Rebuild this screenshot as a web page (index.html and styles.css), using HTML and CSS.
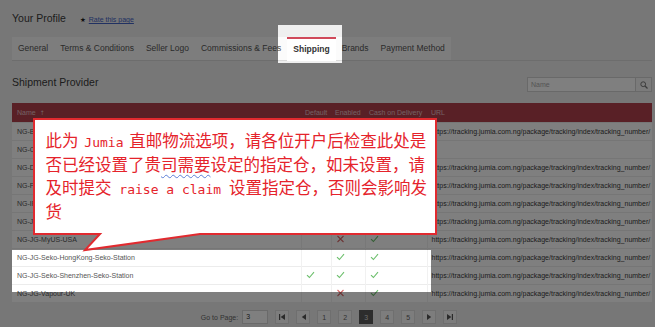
FILE: index.html
```html
<!DOCTYPE html>
<html lang="en">
<head>
<meta charset="utf-8">
<title>Your Profile - Shipping</title>
<link rel="stylesheet" href="styles.css">
</head>
<body>
<div class="page">
  <header class="profile-head">
    <h1 class="title">Your Profile</h1>
    <a class="rate" href="#"><span class="star">★</span><span class="rate-text">Rate this page</span></a>
  </header>
  <nav class="tabs">
    <ul class="tab-list">
      <li class="tab">General</li>
      <li class="tab">Terms &amp; Conditions</li>
      <li class="tab">Seller Logo</li>
      <li class="tab">Commissions &amp; Fees</li>
      <li class="tab active">Shipping</li>
      <li class="tab">Brands</li>
      <li class="tab">Payment Method</li>
    </ul>
  </nav>
  <section class="panel">
    <div class="toolbar">
      <h2 class="subtitle">Shipment Provider</h2>
      <div class="search">
        <span class="search-input">Name</span>
        <span class="search-btn"><svg width="8" height="8" viewBox="0 0 8 8"><circle cx="3.2" cy="3.2" r="2.4" fill="none" stroke="#777" stroke-width="1"/><path d="M5 5 L7.5 7.5" stroke="#777" stroke-width="1.3"/></svg></span>
      </div>
    </div>
    <table class="grid">
      <colgroup><col class="w-name"><col class="w-def"><col class="w-en"><col class="w-cod"><col class="w-url"></colgroup>
      <thead>
        <tr><th class="c-name">Name <span class="sort">↑</span></th><th>Default</th><th>Enabled</th><th>Cash on Delivery</th><th>URL</th></tr>
      </thead>
      <tbody>
        <tr><td class="c-name">NG-BluePost-Express</td><td></td><td><svg class="ic" width="9" height="8" viewBox="0 0 9 8"><path d="M1 4.2 L3.4 6.5 L8 1.2" fill="none" stroke="#6cbf6c" stroke-width="1.1"/></svg></td><td><svg class="ic" width="9" height="8" viewBox="0 0 9 8"><path d="M1 4.2 L3.4 6.5 L8 1.2" fill="none" stroke="#6cbf6c" stroke-width="1.1"/></svg></td><td class="c-url">https://tracking.jumia.com.ng/package/tracking/index/tracking_number/</td></tr>
        <tr><td class="c-name">NG-Clicknship</td><td></td><td><svg class="ic" width="9" height="8" viewBox="0 0 9 8"><path d="M1 4.2 L3.4 6.5 L8 1.2" fill="none" stroke="#6cbf6c" stroke-width="1.1"/></svg></td><td></td><td class="c-url"></td></tr>
        <tr><td class="c-name">NG-DHL-Express</td><td></td><td><svg class="ic" width="9" height="8" viewBox="0 0 9 8"><path d="M1 4.2 L3.4 6.5 L8 1.2" fill="none" stroke="#6cbf6c" stroke-width="1.1"/></svg></td><td><svg class="ic" width="9" height="8" viewBox="0 0 9 8"><path d="M1 4.2 L3.4 6.5 L8 1.2" fill="none" stroke="#6cbf6c" stroke-width="1.1"/></svg></td><td class="c-url">https://tracking.jumia.com.ng/package/tracking/index/tracking_number/</td></tr>
        <tr><td class="c-name">NG-FedEx-International</td><td></td><td><svg class="ic" width="9" height="8" viewBox="0 0 9 8"><path d="M1 4.2 L3.4 6.5 L8 1.2" fill="none" stroke="#6cbf6c" stroke-width="1.1"/></svg></td><td><svg class="ic" width="9" height="8" viewBox="0 0 9 8"><path d="M1 4.2 L3.4 6.5 L8 1.2" fill="none" stroke="#6cbf6c" stroke-width="1.1"/></svg></td><td class="c-url">https://tracking.jumia.com.ng/package/tracking/index/tracking_number/</td></tr>
        <tr><td class="c-name">NG-IPS-Worldwide</td><td></td><td><svg class="ic" width="9" height="8" viewBox="0 0 9 8"><path d="M1 4.2 L3.4 6.5 L8 1.2" fill="none" stroke="#6cbf6c" stroke-width="1.1"/></svg></td><td><svg class="ic" width="9" height="8" viewBox="0 0 9 8"><path d="M1 4.2 L3.4 6.5 L8 1.2" fill="none" stroke="#6cbf6c" stroke-width="1.1"/></svg></td><td class="c-url">https://tracking.jumia.com.ng/package/tracking/index/tracking_number/</td></tr>
        <tr><td class="c-name">NG-JG-Aramex-UAE</td><td></td><td><svg class="ic" width="9" height="8" viewBox="0 0 9 8"><path d="M1 4.2 L3.4 6.5 L8 1.2" fill="none" stroke="#6cbf6c" stroke-width="1.1"/></svg></td><td><svg class="ic" width="9" height="8" viewBox="0 0 9 8"><path d="M1 4.2 L3.4 6.5 L8 1.2" fill="none" stroke="#6cbf6c" stroke-width="1.1"/></svg></td><td class="c-url">https://tracking.jumia.com.ng/package/tracking/index/tracking_number/</td></tr>
        <tr><td class="c-name">NG-JG-MyUS-USA</td><td></td><td><svg class="ic" width="9" height="8" viewBox="0 0 9 8"><path d="M1.5 1 L7.5 7 M7.5 1 L1.5 7" fill="none" stroke="#d96a6a" stroke-width="1.1"/></svg></td><td><svg class="ic" width="9" height="8" viewBox="0 0 9 8"><path d="M1 4.2 L3.4 6.5 L8 1.2" fill="none" stroke="#6cbf6c" stroke-width="1.1"/></svg></td><td class="c-url">https://tracking.jumia.com.ng/package/tracking/index/tracking_number/</td></tr>
        <tr><td class="c-name">NG-JG-Seko-HongKong-Seko-Station</td><td></td><td><svg class="ic" width="9" height="8" viewBox="0 0 9 8"><path d="M1 4.2 L3.4 6.5 L8 1.2" fill="none" stroke="#6cbf6c" stroke-width="1.1"/></svg></td><td><svg class="ic" width="9" height="8" viewBox="0 0 9 8"><path d="M1 4.2 L3.4 6.5 L8 1.2" fill="none" stroke="#6cbf6c" stroke-width="1.1"/></svg></td><td class="c-url">https://tracking.jumia.com.ng/package/tracking/index/tracking_number/</td></tr>
        <tr><td class="c-name">NG-JG-Seko-Shenzhen-Seko-Station</td><td><svg class="ic" width="9" height="8" viewBox="0 0 9 8"><path d="M1 4.2 L3.4 6.5 L8 1.2" fill="none" stroke="#6cbf6c" stroke-width="1.1"/></svg></td><td><svg class="ic" width="9" height="8" viewBox="0 0 9 8"><path d="M1 4.2 L3.4 6.5 L8 1.2" fill="none" stroke="#6cbf6c" stroke-width="1.1"/></svg></td><td><svg class="ic" width="9" height="8" viewBox="0 0 9 8"><path d="M1 4.2 L3.4 6.5 L8 1.2" fill="none" stroke="#6cbf6c" stroke-width="1.1"/></svg></td><td class="c-url">https://tracking.jumia.com.ng/package/tracking/index/tracking_number/</td></tr>
        <tr><td class="c-name">NG-JG-Vapour-UK</td><td></td><td><svg class="ic" width="9" height="8" viewBox="0 0 9 8"><path d="M1.5 1 L7.5 7 M7.5 1 L1.5 7" fill="none" stroke="#d96a6a" stroke-width="1.1"/></svg></td><td><svg class="ic" width="9" height="8" viewBox="0 0 9 8"><path d="M1 4.2 L3.4 6.5 L8 1.2" fill="none" stroke="#6cbf6c" stroke-width="1.1"/></svg></td><td class="c-url">https://tracking.jumia.com.ng/package/tracking/index/tracking_number/</td></tr>
      </tbody>
    </table>
    <div class="pager">
      <span class="pager-label">Go to Page:</span>
      <span class="pager-input">3</span>
      <div class="pager-btns">
        <span class="pg"><svg width="6" height="6" viewBox="0 0 6 6"><rect x="0" y="0" width="1.2" height="6" fill="#555"/><path d="M6 0 L1.6 3 L6 6Z" fill="#555"/></svg></span>
        <span class="pg"><svg width="5" height="6" viewBox="0 0 5 6"><path d="M5 0 L0.8 3 L5 6Z" fill="#555"/></svg></span>
        <span class="pg">1</span>
        <span class="pg">2</span>
        <span class="pg current">3</span>
        <span class="pg">4</span>
        <span class="pg">5</span>
        <span class="pg"><svg width="5" height="6" viewBox="0 0 5 6"><path d="M0 0 L4.2 3 L0 6Z" fill="#555"/></svg></span>
        <span class="pg"><svg width="6" height="6" viewBox="0 0 6 6"><path d="M0 0 L4.4 3 L0 6Z" fill="#555"/><rect x="4.8" y="0" width="1.2" height="6" fill="#555"/></svg></span>
      </div>
    </div>
  </section>
</div>
<div class="dim"></div>
<div class="callout">
  <svg class="callout-shape" width="405" height="134" viewBox="0 0 405 134"><path d="M1 1H403V116H167L52 132L67 116H1Z" fill="#fff" stroke="#e12a2f" stroke-width="2"/></svg>
  <div class="callout-text">
    <div class="line">此为<span class="lat lat-tight"> Jumia </span>直邮物流选项，请各位开户后检查此处是</div>
    <div class="line">否已经设置了贵<span class="wavy">司需要</span>设定的指定仓，如未设置，请</div>
    <div class="line">及时提交<span class="lat"> raise a claim </span>设置指定仓，否则会影响发</div>
    <div class="line">货</div>
  </div>
</div>
</body>
</html>
```
FILE: styles.css
```css
* { box-sizing: border-box; }
html, body { margin: 0; padding: 0; }
body {
  width: 655px;
  height: 327px;
  overflow: hidden;
  position: relative;
  background: #efefef;
  font-family: "Liberation Sans", Arial, sans-serif;
  color: #555;
}
.page { padding: 0 3px 0 12px; }

.profile-head { height: 37px; display: flex; align-items: flex-start; padding-top: 11px; }
.title { margin: 0; font-size: 10.5px; line-height: 14px; font-weight: normal; color: #3a3a3a; }
.rate { margin: 5px 0 0 14px; display: flex; align-items: center; font-size: 7px; line-height: 8px; color: #4362c4; text-decoration: none; }
.star { color: #1e1e1e; font-family: "DejaVu Sans", sans-serif; font-size: 6.5px; margin-right: 3px; }
.rate-text { text-decoration: underline; }

.tabs { height: 24px; border-bottom: 1px solid #dadada; }
.tab-list { list-style: none; margin: 0; padding: 0; display: flex; width: max-content; height: 23px; background: #fbfbfb; }
.tab { padding: 0 6px; font-size: 8.5px; line-height: 23px; color: #555; white-space: nowrap; }
.tab.active { background: #fff; border-top: 2px solid #d0495a; line-height: 21px; height: 24px; font-weight: bold; color: #333; }

.toolbar { display: flex; justify-content: space-between; align-items: flex-start; height: 42px; }
.subtitle { margin: 15px 0 0; font-size: 10.5px; line-height: 12px; font-weight: normal; color: #3a3a3a; }
.search { margin-top: 16px; display: flex; height: 15px; border: 1px solid #d2d2d2; background: #fff; }
.search-input { width: 108px; padding-left: 3px; font-size: 7px; line-height: 13px; color: #aaa; border-right: 1px solid #d2d2d2; }
.search-btn { width: 15px; display: flex; align-items: center; justify-content: center; background: #f7f7f7; }

.grid { width: 640px; table-layout: fixed; border-collapse: collapse; font-size: 7px; }
.w-name { width: 289px; }
.w-def { width: 30px; }
.w-en { width: 34px; }
.w-cod { width: 62px; }
.w-url { width: 225px; }
.grid th { height: 19px; padding: 0 0 0 4px; background: #b3414d; color: #e6c2c6; font-weight: normal; text-align: left; white-space: nowrap; }
.grid td { height: 18px; padding: 0 0 0 4px; background: #fff; border-top: 1px solid #ececec; color: #555; white-space: nowrap; overflow: hidden; }
.grid td + td { border-left: 1px solid #f1f1f1; }
.grid .c-name { padding-left: 5px; }
.grid .c-url { color: #3a3a3a; padding-left: 4px; }
.sort { font-family: "DejaVu Sans", sans-serif; font-size: 6px; margin-left: 2px; }
.ic { display: block; }

.pager { display: flex; justify-content: center; align-items: center; height: 14px; margin-top: 8px; padding-right: 6px; font-size: 7px; color: #666; }
.pager-label { margin-right: 4px; }
.pager-input { width: 26px; height: 14px; margin-right: 7px; padding-left: 3px; border: 1px solid #d5d5d5; background: #fff; line-height: 12px; color: #333; }
.pager-btns { display: flex; gap: 7px; }
.pg { width: 14px; height: 14px; display: flex; align-items: center; justify-content: center; border: 1px solid #dedede; background: #fbfbfb; color: #666; }
.pg.current { background: #5a5a5a; border-color: #5a5a5a; color: #d8d8d8; }

.dim {
  position: absolute;
  left: 0;
  top: 0;
  width: 655px;
  height: 327px;
  background: rgba(0, 0, 0, 0.5);
  clip-path: path(evenodd, "M0 0H655V327H0Z M278 25H342V63H278Z M12 250H431V292H12Z");
  z-index: 1;
}

.callout { position: absolute; left: 33px; top: 118px; width: 405px; height: 134px; z-index: 2; }
.callout-shape { position: absolute; left: 0; top: 0; }
.callout-text {
  position: relative;
  padding: 11px 0 0 12.5px;
  font-family: "Noto Sans CJK SC", "Noto Sans CJK JP", sans-serif;
  font-size: 16.5px;
  color: #e5232b;
  white-space: nowrap;
}
.line { height: 23.7px; line-height: 23.7px; }
.lat { font-family: "DejaVu Sans Mono", "Liberation Mono", monospace; font-size: 13px; line-height: 1; }
.lat-tight { word-spacing: -2px; }
.wavy { text-decoration: underline wavy #5b7fd6; text-decoration-thickness: 1px; text-underline-offset: 3px; }
```
